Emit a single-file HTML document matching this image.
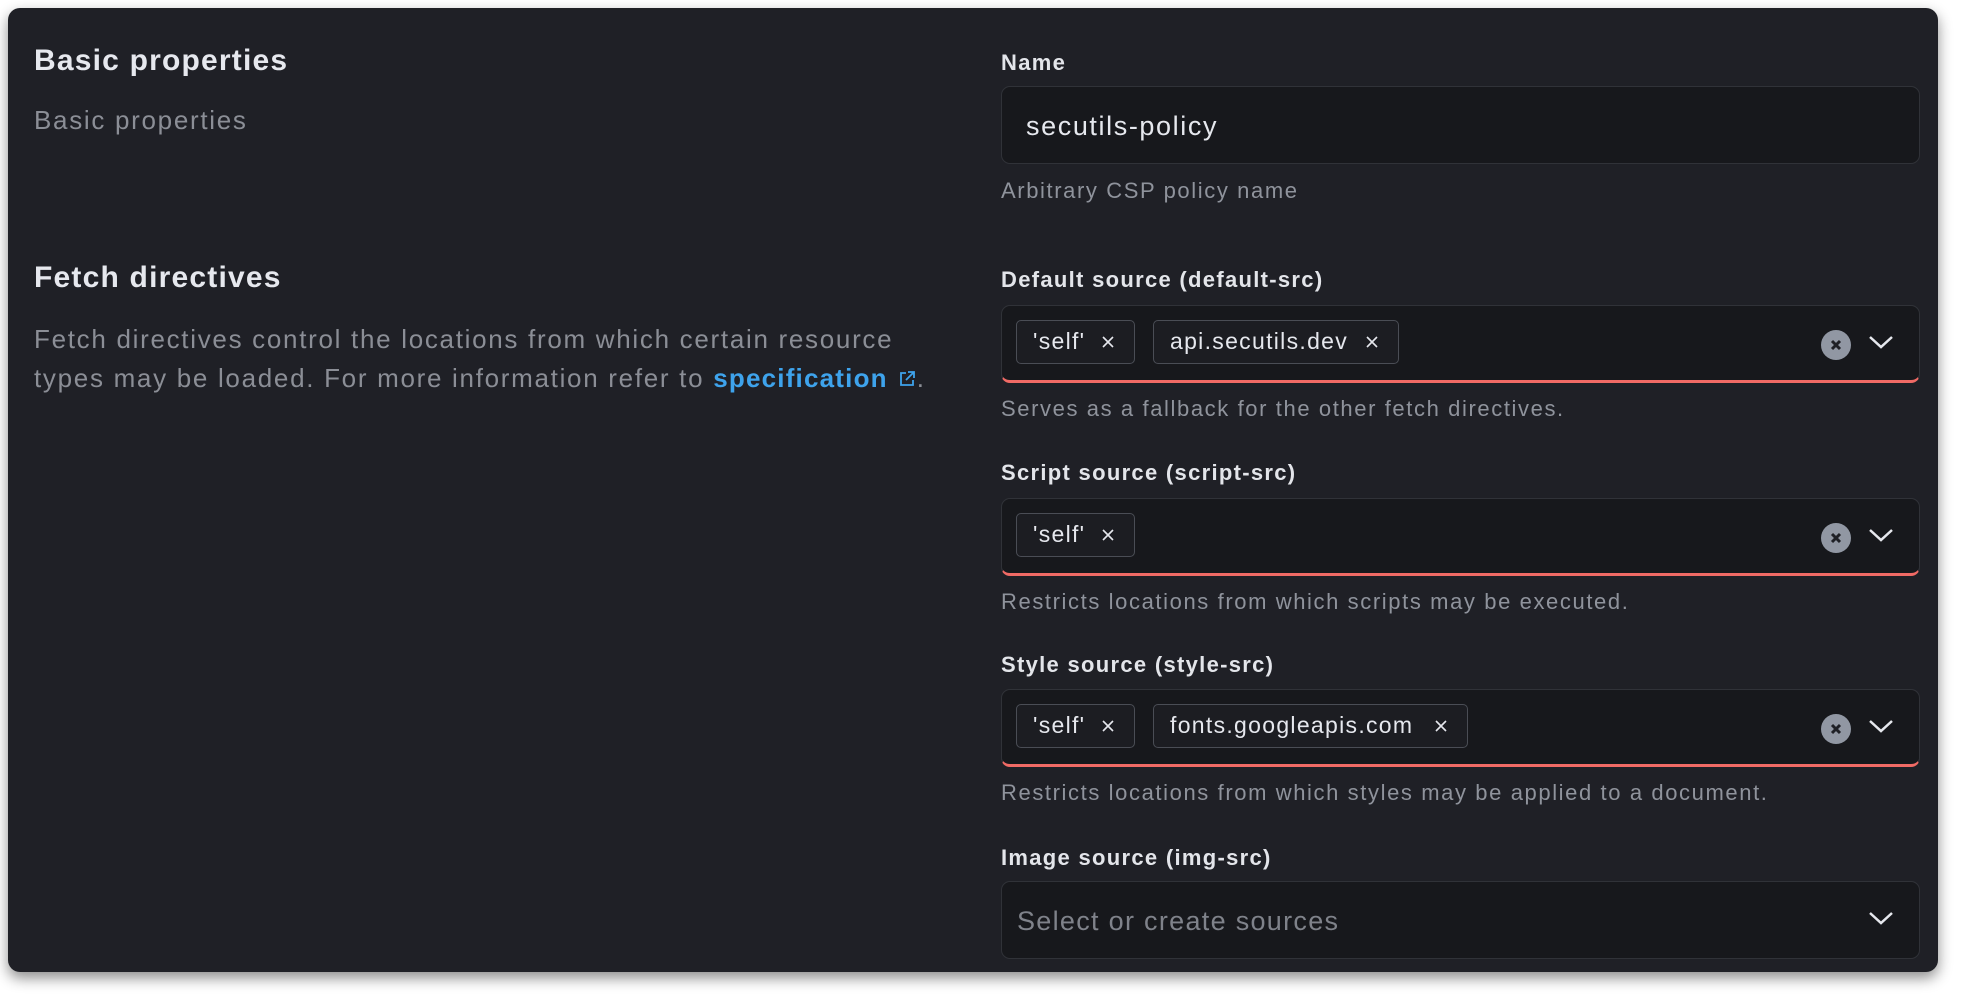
<!DOCTYPE html>
<html><head><meta charset="utf-8"><style>
*{margin:0;padding:0;box-sizing:border-box}
body{width:1962px;height:996px;background:#fff;font-family:"Liberation Sans",sans-serif;position:relative;overflow:hidden}
.card{position:absolute;left:8px;top:8px;width:1930px;height:964px;background:#1f2026;border-radius:12px;box-shadow:0 6px 14px rgba(0,0,0,.45)}
.a{position:absolute;white-space:nowrap}
.h{color:#e6e8ee;font-weight:bold;font-size:30px;letter-spacing:1.2px}
.m{color:#8b8e96;font-size:26px;letter-spacing:1.7px}
.lbl{color:#e3e5ea;font-weight:bold;font-size:22px;left:1001px;letter-spacing:1.3px}
.help{color:#8f939c;font-size:22px;left:1001px;letter-spacing:1.6px}
.inp{position:absolute;left:1001px;width:919px;height:78px;background:#17181c;border:1.5px solid #303238;border-radius:9px}
.err{border-bottom:3px solid #f06a65}
.pill{position:absolute;top:14px;height:44px;border:1.5px solid #4a4d55;border-radius:5px;color:#e6e8ee;font-size:23px;line-height:41px;padding-left:16px;background:#1c1d22;letter-spacing:1.3px}
.pill svg{position:absolute;right:19px;top:14px}
.clr{position:absolute;right:68px;top:24px;width:30px;height:30px;border-radius:50%;background:#9197a3}
.chev{position:absolute;right:25px;top:28px}
</style></head><body>
<div class="card"></div>
<div class="a h" style="left:34px;top:44px">Basic properties</div>
<div class="a m" style="left:34px;top:105px">Basic properties</div>
<div class="a h" style="left:34px;top:261px">Fetch directives</div>
<div class="a m" style="left:34px;top:320px;line-height:39px">Fetch directives control the locations from which certain resource<br>types may be loaded. For more information refer to <span style="color:#3ea3ec;font-weight:bold;letter-spacing:1.2px">specification</span> <svg width="20" height="20" viewBox="0 0 20 20" style="vertical-align:-2px"><path d="M9 4H4v12h12v-5M11 3h6v6M17 3l-8 8" fill="none" stroke="#3ea3ec" stroke-width="1.8"/></svg>.</div>

<div class="a lbl" style="top:50px">Name</div>
<div class="inp" style="top:86px"><div class="a" style="left:24px;top:24px;color:#e6e8ee;font-size:27px;letter-spacing:1.6px">secutils-policy</div></div>
<div class="a help" style="top:178px">Arbitrary CSP policy name</div>

<div class="a lbl" style="top:267px">Default source (default-src)</div>
<div class="inp err" style="top:305px">
<div class="pill" style="left:14px;width:119px">'self'<svg width="14" height="14"><path d="M2 2L12 12M12 2L2 12" stroke="#e6e8ee" stroke-width="1.6"/></svg></div>
<div class="pill" style="left:151px;width:246px">api.secutils.dev<svg width="14" height="14"><path d="M2 2L12 12M12 2L2 12" stroke="#e6e8ee" stroke-width="1.6"/></svg></div>
<div class="clr"><svg width="30" height="30"><path d="M11 11L19 19M19 11L11 19" stroke="#1f2026" stroke-width="3"/></svg></div>
<svg class="chev" width="26" height="16"><path d="M2 3L13 13L24 3" fill="none" stroke="#e6e8ee" stroke-width="2.5"/></svg>
</div>
<div class="a help" style="top:396px">Serves as a fallback for the other fetch directives.</div>

<div class="a lbl" style="top:460px">Script source (script-src)</div>
<div class="inp err" style="top:498px">
<div class="pill" style="left:14px;width:119px">'self'<svg width="14" height="14"><path d="M2 2L12 12M12 2L2 12" stroke="#e6e8ee" stroke-width="1.6"/></svg></div>
<div class="clr"><svg width="30" height="30"><path d="M11 11L19 19M19 11L11 19" stroke="#1f2026" stroke-width="3"/></svg></div>
<svg class="chev" width="26" height="16"><path d="M2 3L13 13L24 3" fill="none" stroke="#e6e8ee" stroke-width="2.5"/></svg>
</div>
<div class="a help" style="top:589px">Restricts locations from which scripts may be executed.</div>

<div class="a lbl" style="top:652px">Style source (style-src)</div>
<div class="inp err" style="top:689px">
<div class="pill" style="left:14px;width:119px">'self'<svg width="14" height="14"><path d="M2 2L12 12M12 2L2 12" stroke="#e6e8ee" stroke-width="1.6"/></svg></div>
<div class="pill" style="left:151px;width:315px">fonts.googleapis.com<svg width="14" height="14"><path d="M2 2L12 12M12 2L2 12" stroke="#e6e8ee" stroke-width="1.6"/></svg></div>
<div class="clr"><svg width="30" height="30"><path d="M11 11L19 19M19 11L11 19" stroke="#1f2026" stroke-width="3"/></svg></div>
<svg class="chev" width="26" height="16"><path d="M2 3L13 13L24 3" fill="none" stroke="#e6e8ee" stroke-width="2.5"/></svg>
</div>
<div class="a help" style="top:780px">Restricts locations from which styles may be applied to a document.</div>

<div class="a lbl" style="top:845px">Image source (img-src)</div>
<div class="inp" style="top:881px">
<div class="a" style="left:15px;top:24px;color:#7f828a;font-size:27px;letter-spacing:1.3px">Select or create sources</div>
<svg class="chev" width="26" height="16"><path d="M2 3L13 13L24 3" fill="none" stroke="#e6e8ee" stroke-width="2.5"/></svg>
</div>
</body></html>
